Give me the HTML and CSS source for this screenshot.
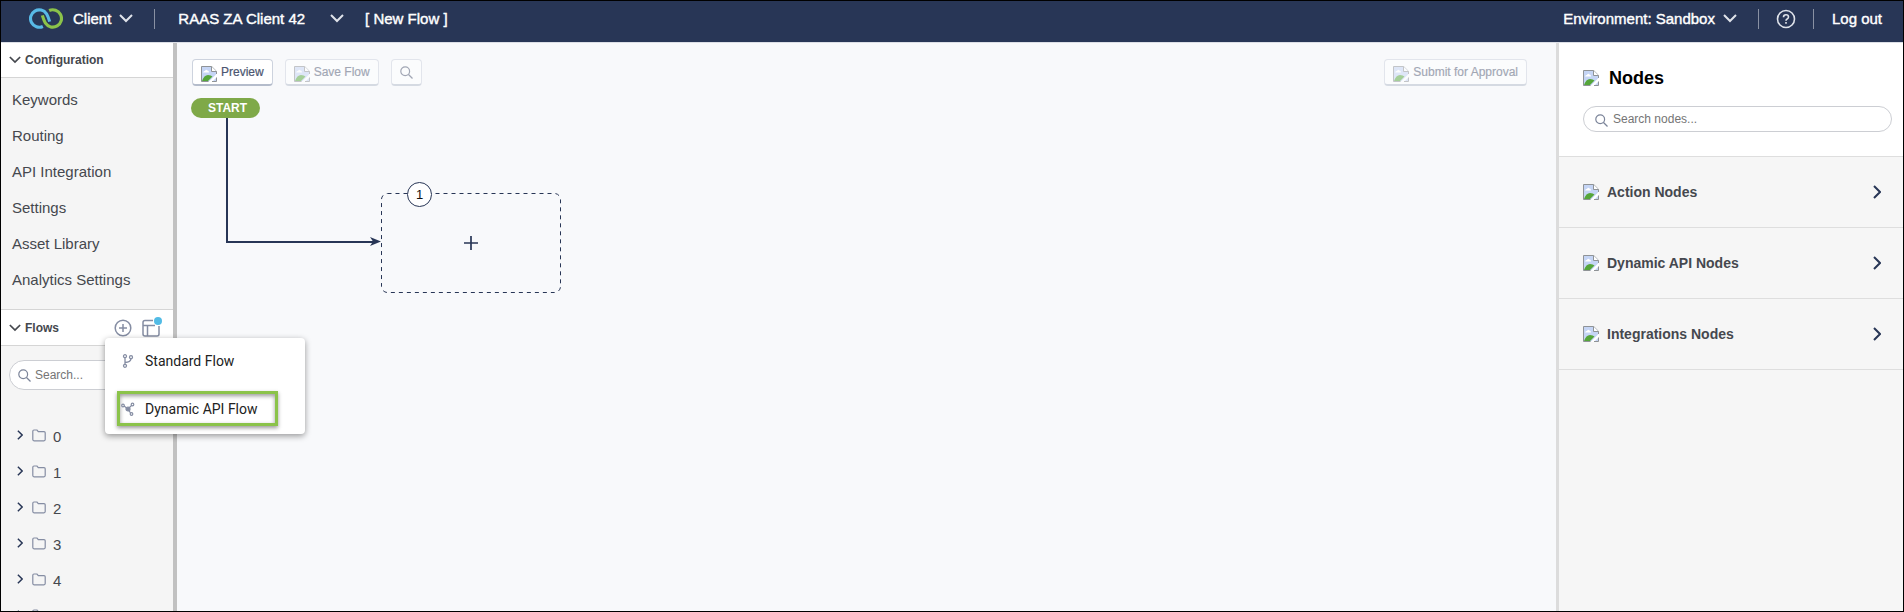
FILE: index.html
```
<!DOCTYPE html>
<html lang="en">
<head>
    <meta charset="UTF-8">
    <title>Flow Builder</title>
    <link rel="stylesheet" href="styles.css">
</head>
<body>
<!-- shared icons -->
<svg class="sprite" aria-hidden="true">
    <symbol id="down" viewBox="0 0 14 9"><path d="M1 1l6 6 6-6" fill="none" stroke="currentColor" stroke-width="2"/></symbol>
    <symbol id="right" viewBox="0 0 8 14"><path d="M1 1l6 6-6 6" fill="none" stroke="currentColor" stroke-width="2"/></symbol>
    <symbol id="search" viewBox="0 0 13 13"><circle cx="5.2" cy="5.2" r="4.4" fill="none" stroke="currentColor" stroke-width="1.2"/><path d="M8.5 8.5l4 4" stroke="currentColor" stroke-width="1.2"/></symbol>
    <symbol id="folder" viewBox="0 0 14 13"><path d="M.8 2.2Q.8 1 2 1h3l1.3 1.6H12q1.2 0 1.2 1.2v6.8q0 1.2-1.2 1.2H2Q.8 11.8.8 10.6z" fill="none" stroke="currentColor" stroke-width="1.2"/></symbol>
    <symbol id="picture" viewBox="0 0 16 16">
        <path d="M.5.5h10.2l4.8 4.8v10.2H.5z" fill="#c5d5f5"/>
        <path d="M2 6.500q.5-2 2-1.500 1-2 2.500-.5 1.500 0 1.500 2z" fill="#fff"/>
        <path d="M1 15q2-6 6-6 3 0 4.500 1.500L7 15z" fill="#55a63a"/>
        <path d="M7.500 16L16 7.500V11l-5 5z" fill="#fff"/>
        <path d="M15.500 8V5.300L10.700.5H.5v15h7M11 15.500h4.500V11.500" fill="none" stroke="#8f9396"/>
        <path d="M10.500.5v5h5" fill="#fff" stroke="#8f9396"/>
    </symbol>
</svg>
<div id="app">
    <header id="topbar">
        <svg class="logo" viewBox="0 0 32 20" fill="none" stroke-width="3">
            <path d="M13 17.600A8.300 8.300 0 1 1 16.500 5.500Q18 8 19.500 13" stroke="#58b9e6"/>
            <path d="M19 2.400A8.300 8.300 0 1 1 15.500 14.500Q14 12 12.500 7" stroke="#8bc34a"/>
        </svg>
        <button class="drop client">Client <svg class="down"><use href="#down"/></svg></button>
        <span class="bar"></span>
        <button class="drop account">RAAS ZA Client 42 <svg class="down"><use href="#down"/></svg></button>
        <span class="flow-name">[ New Flow ]</span>
        <button class="drop env">Environment: Sandbox <svg class="down"><use href="#down"/></svg></button>
        <span class="bar"></span>
        <button class="help" aria-label="Help">
            <svg viewBox="0 0 20 20" fill="none" stroke="currentColor" stroke-width="1.600"><circle cx="10" cy="10" r="8.500"/><path d="M7.500 8.200q0-2.400 2.500-2.400t2.500 2.200q0 1.300-1.400 2-1.100.5-1.100 1.700M10 13v1.800"/></svg>
        </button>
        <span class="bar"></span>
        <a class="logout" href="#">Log out</a>
    </header>
    <main>
        <nav id="sidebar">
            <div class="section"><svg class="small-down"><use href="#down"/></svg><h2>Configuration</h2></div>
            <ul class="config">
                <li><a href="#">Keywords</a></li>
                <li><a href="#">Routing</a></li>
                <li><a href="#">API Integration</a></li>
                <li><a href="#">Settings</a></li>
                <li><a href="#">Asset Library</a></li>
                <li><a href="#">Analytics Settings</a></li>
            </ul>
            <div class="section flows">
                <svg class="small-down"><use href="#down"/></svg><h2>Flows</h2>
                <button class="tool" aria-label="Add flow">
                    <svg viewBox="0 0 18 18" fill="none" stroke="currentColor" stroke-width="1.500"><circle cx="9" cy="9" r="7.800"/><path d="M9 5v8M5 9h8"/></svg>
                </button>
                <button class="tool" aria-label="Templates">
                    <svg viewBox="0 0 18 18" fill="none" stroke="currentColor" stroke-width="1.500"><path d="M11 1.500H3Q1 1.500 1 3.500V15q0 2 2 2h12q2 0 2-2V7M1 6.500h12M5.500 6.500V17"/></svg>
                    <span class="dot"></span>
                </button>
                <div id="menu">
                    <button>
                        <svg viewBox="0 0 14 14" fill="none" stroke="currentColor" stroke-width="1.300"><circle cx="4" cy="2.200" r="1.500"/><circle cx="4" cy="11.800" r="1.500"/><circle cx="10" cy="3.200" r="1.500"/><path d="M4 3.700v6.600M4 8.500q5.500 0 6-3.800"/></svg>
                        Standard Flow
                    </button>
                    <button class="selected">
                        <svg viewBox="0 0 14 14" fill="none" stroke="currentColor" stroke-width="1.200"><path d="M3 4l4 3 3.500-3.500M7 7l2.500 4"/><circle cx="7" cy="7" r="2" fill="currentColor"/><circle cx="2" cy="3.500" r="1.300"/><circle cx="11.500" cy="2.500" r="1.300"/><circle cx="10.500" cy="12" r="1.300"/></svg>
                        Dynamic API Flow
                    </button>
                </div>
            </div>
            <label class="search"><svg><use href="#search"/></svg><input type="text" placeholder="Search..." aria-label="Search flows"></label>
            <ul class="folders">
                <li><svg class="right"><use href="#right"/></svg><svg class="folder"><use href="#folder"/></svg><a href="#">0</a></li>
                <li><svg class="right"><use href="#right"/></svg><svg class="folder"><use href="#folder"/></svg><a href="#">1</a></li>
                <li><svg class="right"><use href="#right"/></svg><svg class="folder"><use href="#folder"/></svg><a href="#">2</a></li>
                <li><svg class="right"><use href="#right"/></svg><svg class="folder"><use href="#folder"/></svg><a href="#">3</a></li>
                <li><svg class="right"><use href="#right"/></svg><svg class="folder"><use href="#folder"/></svg><a href="#">4</a></li>
                <li><svg class="right"><use href="#right"/></svg><svg class="folder"><use href="#folder"/></svg></li>
            </ul>
        </nav>
        <section id="canvas">
            <div class="toolbar">
                <button class="btn"><svg class="pic"><use href="#picture"/></svg>Preview</button>
                <button class="btn" disabled><svg class="pic"><use href="#picture"/></svg>Save Flow</button>
                <button class="btn find" disabled aria-label="Find"><svg><use href="#search"/></svg></button>
                <button class="btn submit" disabled><svg class="pic"><use href="#picture"/></svg>Submit for Approval</button>
            </div>
            <div class="board">
                <svg class="wire" viewBox="0 0 160 136"><path d="M2 0v126h148" fill="none" stroke="#283656" stroke-width="2"/><path d="M145 121l11 4.500-11 4.500 3-4.500z" fill="#283656"/></svg>
                <div class="start">START</div>
                <div class="node">
                    <svg class="outline"><rect x=".5" y=".5" width="179" height="99" rx="6"/></svg>
                    <span class="number">1</span>
                    <button aria-label="Add node"><svg viewBox="0 0 14 14"><path d="M7 0v14M0 7h14" stroke="currentColor" stroke-width="1.700"/></svg></button>
                </div>
            </div>
        </section>
        <aside id="nodes">
            <div class="head">
                <h1><svg class="pic"><use href="#picture"/></svg>Nodes</h1>
                <label class="search"><svg><use href="#search"/></svg><input type="text" placeholder="Search nodes..." aria-label="Search nodes"></label>
            </div>
            <button class="group"><svg class="pic"><use href="#picture"/></svg>Action Nodes<svg class="right"><use href="#right"/></svg></button>
            <button class="group"><svg class="pic"><use href="#picture"/></svg>Dynamic API Nodes<svg class="right"><use href="#right"/></svg></button>
            <button class="group"><svg class="pic"><use href="#picture"/></svg>Integrations Nodes<svg class="right"><use href="#right"/></svg></button>
        </aside>
    </main>
</div>
</body>
</html>
```
FILE: styles.css
```
*{
    padding: 0;
    margin: 0;
    box-sizing: border-box;
}
body{
    font-family: "Liberation Sans", Arial, sans-serif;
    font-size: 15px;
    color: #45484e;
}
a{
    color: inherit;
    text-decoration: none;
}
ul{
    list-style: none;
}
button{
    font: inherit;
    color: inherit;
    background: none;
    border: none;
    cursor: pointer;
}
svg{
    flex: none;
    display: block;
}
.sprite{
    position: absolute;
    width: 0;
    height: 0;
}
#app{
    height: 100vh;
    border: 1px solid #000;
    display: flex;
    flex-direction: column;
    overflow: hidden;
}
main{
    flex: 1;
    min-height: 0;
    display: flex;
}

/* top bar */
#topbar{
    height: 42px;
    flex: none;
    display: flex;
    align-items: center;
    padding: 0 21px 6px 28px;
    background-color: #283656;
    border-bottom: 1px solid #dcdfe6;
    color: #fff;
    -webkit-text-stroke: 0.4px #fff;
}
.logo{
    width: 34px;
    height: 21px;
    margin-right: 10px;
}
.drop{
    display: flex;
    align-items: center;
    gap: 8px;
}
.down{
    width: 14px;
    height: 9px;
    color: #dfe3ea;
}
.bar{
    width: 1px;
    height: 20px;
    background-color: #8991a3;
}
.client{
    margin-right: 21px;
}
.account{
    margin-left: 23px;
    gap: 25px;
}
.flow-name{
    margin-left: 21px;
}
.env{
    margin-left: auto;
    margin-right: 21px;
}
.help{
    margin: 0 17px;
    color: #dfe3ea;
}
.help svg{
    width: 20px;
    height: 20px;
}
.logout{
    margin-left: 18px;
}

/* left side */
#sidebar{
    width: 176px;
    flex: none;
    background-color: #f5f5f5;
    border-right: 4px solid #c1c1c1;
}
.section{
    height: 35px;
    display: flex;
    align-items: center;
    padding: 0 13px 0 8px;
    background-color: #fff;
    border-bottom: 1px solid #d5d5d5;
}
.section h2{
    margin-left: 4px;
    font-size: 12px;
}
.small-down{
    width: 12px;
    height: 8px;
}
.config{
    padding: 4px 0 11px 11px;
}
.config li{
    height: 36px;
    line-height: 36px;
}
.flows{
    position: relative;
    height: 37px;
    border-top: 1px solid #d5d5d5;
}
.tool{
    position: relative;
    margin-left: 10px;
    color: #858da3;
}
.flows h2{
    margin-right: auto;
}
.tool svg{
    width: 18px;
    height: 18px;
}
.dot{
    position: absolute;
    top: -2px;
    right: -2px;
    width: 8px;
    height: 8px;
    border-radius: 50%;
    background-color: #52bbe5;
}
#menu{
    position: absolute;
    z-index: 2;
    left: 104px;
    top: 28px;
    width: 200px;
    height: 96px;
    background-color: #fff;
    border-radius: 4px;
    box-shadow: 0 2px 6px rgba(0, 0, 0, .4);
    font-family: Roboto, sans-serif;
    font-size: 14px;
    color: #222;
}
#menu button{
    display: flex;
    align-items: center;
    gap: 10px;
    width: 161px;
    height: 35px;
    margin: 5px 0 0 12px;
    padding-left: 4px;
}
#menu .selected{
    margin-top: 13px;
    padding-left: 1px;
    border: 3px solid #8bc34a;
    box-shadow: 0 2px 4px rgba(0, 0, 0, .4), inset 0 2px 4px rgba(0, 0, 0, .4);
}
#menu svg{
    width: 14px;
    height: 14px;
    color: #858da3;
}
.search{
    display: flex;
    align-items: center;
    background-color: #fff;
    border: 1px solid #ccced3;
    border-radius: 15px;
    color: #7b8499;
}
.search svg{
    width: 13px;
    height: 13px;
    margin: 0 4px 0 8px;
}
.search input{
    flex: 1;
    min-width: 0;
    border: none;
    outline: none;
    background: none;
    font: 12px "Liberation Sans", Arial, sans-serif;
}
.search input::placeholder{
    color: #757575;
}
#sidebar .search{
    height: 30px;
    margin: 14px 8px 27px;
}
.folders li{
    display: flex;
    align-items: center;
    height: 36px;
    padding-left: 16px;
}
.folders .right{
    width: 6px;
    height: 10px;
    margin-right: 9px;
    color: #283656;
}
.folders a{
    padding-top: 3px;
}
.folder{
    width: 14px;
    height: 13px;
    margin-right: 7px;
    color: #858da3;
}

/* canvas */
#canvas{
    flex: 1;
    min-width: 0;
    background-color: #f8f9fb;
}
.toolbar{
    display: flex;
    gap: 12px;
    padding: 16px 29px 0 15px;
}
.btn{
    display: flex;
    align-items: center;
    gap: 4px;
    height: 27px;
    padding: 0 8px;
    background-color: #fff;
    border: 1px solid #cdd3de;
    border-bottom: 2px solid #b4bccb;
    border-radius: 4px;
    font-size: 12px;
    color: #4c5670;
    -webkit-text-stroke: 0.2px #4c5670;
}
.btn:disabled{
    opacity: .5;
}
.pic{
    width: 16px;
    height: 16px;
}
.btn .pic{
    margin-top: 4px;
}
.find svg{
    width: 13px;
    height: 13px;
}
.submit{
    margin-left: auto;
}
.board{
    position: relative;
}
.start{
    position: absolute;
    left: 14px;
    top: 12px;
    width: 69px;
    height: 20px;
    padding-left: 4px;
    border-radius: 10px;
    background-color: #7fa948;
    color: #fff;
    font-size: 12px;
    font-weight: bold;
    line-height: 20px;
    text-align: center;
}
.wire{
    position: absolute;
    left: 48px;
    top: 30px;
    width: 160px;
    height: 136px;
}
.node{
    position: absolute;
    left: 204px;
    top: 107px;
    width: 180px;
    height: 100px;
    display: flex;
    align-items: center;
    justify-content: center;
    color: #283656;
}
.outline{
    position: absolute;
    left: 0;
    top: 0;
    width: 180px;
    height: 100px;
    fill: none;
    stroke: #283656;
    stroke-dasharray: 4 4;
}
.number{
    position: absolute;
    left: 26px;
    top: -11px;
    width: 25px;
    height: 25px;
    border: 1px solid #283656;
    border-radius: 50%;
    background-color: #fff;
    color: #111;
    font-size: 13px;
    line-height: 23px;
    text-align: center;
}
.node button svg{
    width: 14px;
    height: 14px;
}

/* right side */
#nodes{
    width: 347px;
    flex: none;
    background-color: #f6f6f6;
    border-left: 3px solid #dcdcdc;
}
.head{
    padding: 23px 11px 24px 24px;
    background-color: #fff;
    border-bottom: 1px solid #dedede;
}
.head h1{
    display: flex;
    align-items: center;
    gap: 10px;
    height: 24px;
    margin-bottom: 16px;
    font-size: 18px;
    color: #000;
}
.head .search{
    height: 26px;
}
.head .search svg{
    margin: 2px 5px 0 11px;
}
.group{
    display: flex;
    align-items: center;
    gap: 8px;
    width: 100%;
    height: 71px;
    padding: 0 22px 0 24px;
    border-bottom: 1px solid #dedede;
    font-size: 14px;
    font-weight: bold;
}
.group .right{
    width: 8px;
    height: 14px;
    margin-left: auto;
    color: #283656;
}
```
